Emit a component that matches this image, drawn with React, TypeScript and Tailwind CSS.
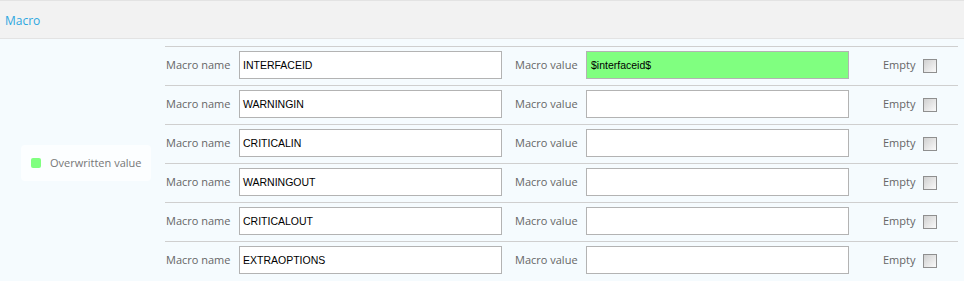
import React from 'react';

const macros = [
  { name: 'INTERFACEID', value: '$interfaceid$', overwritten: true },
  { name: 'WARNINGIN', value: '' },
  { name: 'CRITICALIN', value: '' },
  { name: 'WARNINGOUT', value: '' },
  { name: 'CRITICALOUT', value: '' },
  { name: 'EXTRAOPTIONS', value: '' },
];

const labelFont = { fontFamily: '"Open Sans", "DejaVu Sans", sans-serif' };
const inputFont = { fontFamily: '"Liberation Sans", Arial, sans-serif' };

function Checkbox() {
  return (
    <div className="w-[14px] h-[14px] border border-[#8f8f8f] bg-gradient-to-br from-[#d0d0d0] to-[#fafafa] mt-[2px]" />
  );
}

export default function App() {
  return (
    <div className="w-[964px] h-[281px] bg-[#f5fbfe] overflow-hidden" style={labelFont}>
      <div className="h-[39px] bg-[#f2f2f2] border-t border-b border-[#e3e3e3] flex items-center pl-[5px] pt-[3px]">
        <span className="text-[12px] text-[#2ea7e0]">Macro</span>
      </div>

      <div className="flex">
        <div className="w-[165px] shrink-0 flex items-center pl-[21px] pt-[7px]">
          <div className="w-[130px] h-[36px] bg-white/70 rounded-[4px] flex items-center pl-[10px] gap-[9px]">
            <span className="w-[10px] h-[10px] rounded-[2px] bg-[#80ff80]" />
            <span className="text-[11px] text-[#777]">Overwritten value</span>
          </div>
        </div>

        <div className="w-[793px] mt-[7px]">
          {macros.map((m) => (
            <div key={m.name} className="h-[39px] border-t border-[#cfcfcf] flex items-start pt-[4px]">
              <span className="w-[74px] shrink-0 text-[11px] text-[#666] leading-[28px] pl-[1px]">Macro name</span>
              <div
                className="w-[263px] h-[28px] border border-[#b3b3b3] bg-white text-[10.5px] text-black flex items-center pl-[3px] pt-[2px]"
                style={inputFont}
              >
                {m.name}
              </div>
              <span className="w-[84px] shrink-0 text-[11px] text-[#666] leading-[28px] pl-[13px]">Macro value</span>
              <div
                className={`w-[263px] h-[28px] border border-[#b3b3b3] text-[10.5px] text-black flex items-center pl-[4px] pt-[2px] ${
                  m.overwritten ? 'bg-[#80ff80]' : 'bg-white'
                }`}
                style={inputFont}
              >
                {m.value}
              </div>
              <div className="flex items-center ml-[34px] h-[28px] gap-[8px]">
                <span className="text-[11px] text-[#666]">Empty</span>
                <Checkbox />
              </div>
            </div>
          ))}
        </div>
      </div>
    </div>
  );
}
